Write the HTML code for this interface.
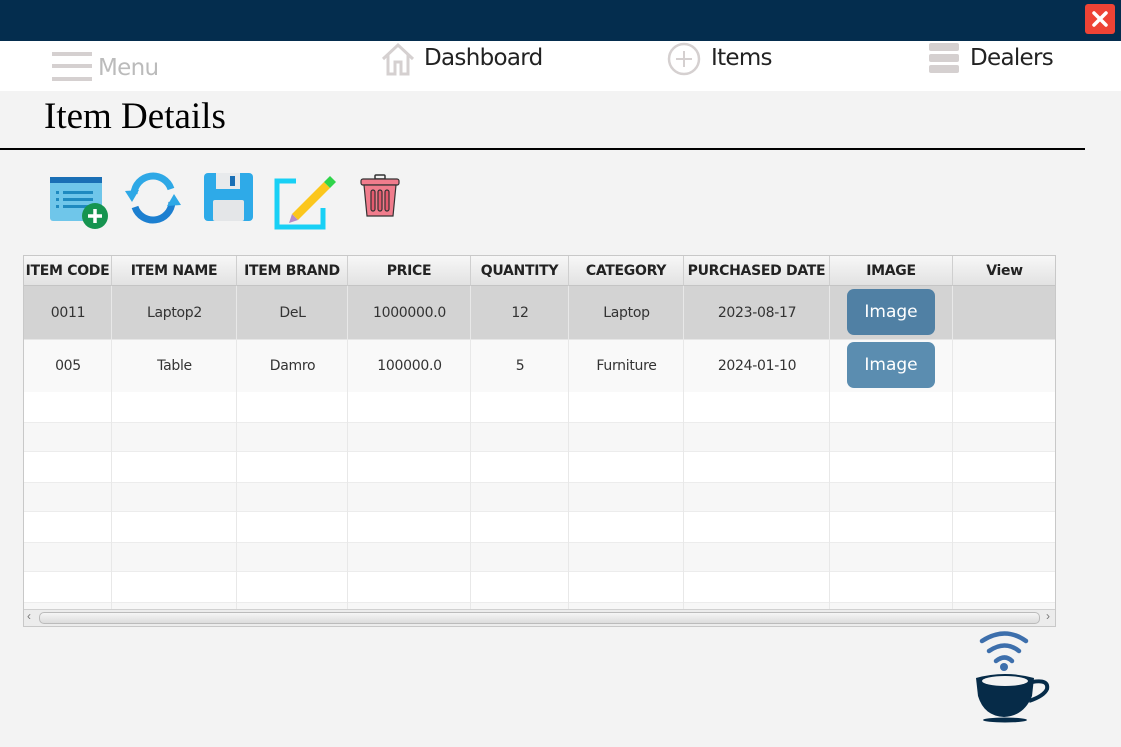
<!DOCTYPE html>
<html><head><meta charset="utf-8"><style>
*{margin:0;padding:0;box-sizing:border-box}
body{width:1121px;height:747px;background:#f3f3f3;position:relative;overflow:hidden;font-family:"Liberation Sans",sans-serif}
.abs{position:absolute}
.top{left:0;top:0;width:1121px;height:41px;background:#042d4e}
.close{left:1085px;top:4px;width:30px;height:30px;background:#ee4335;border-radius:3px}
.nav{left:0;top:41px;width:1121px;height:50px;background:#fff}
.nt{font-size:23px;color:#222;font-family:"DejaVu Sans","Liberation Sans",sans-serif;letter-spacing:-0.7px}
.title{left:44px;top:95px;font-family:"Liberation Serif",serif;font-size:37px;color:#000}
.rule{left:0;top:148px;width:1085px;height:2px;background:#000}
.tbl{left:23px;top:255px;width:1033px;height:372px;border:1px solid #c8c8c8;background:#fff;overflow:hidden}
.cell{position:absolute;display:flex;align-items:center;justify-content:center;font-size:14px;color:#333;font-family:"DejaVu Sans","Liberation Sans",sans-serif;letter-spacing:-0.3px}
.hd{font-weight:bold;font-size:14px;color:#222;background:linear-gradient(#f7f7f7,#e2e2e2);border-right:1px solid #cfcfcf;border-bottom:1px solid #c4c4c4}
.btn{position:absolute;width:88px;height:46px;border-radius:7px;color:#fff;font-size:17px;display:flex;align-items:center;justify-content:center;font-family:"DejaVu Sans",sans-serif}
</style></head><body>
<div class="abs top"></div>
<div class="abs close"><svg width="30" height="30"><path d="M9 9L21 21M21 9L9 21" stroke="#fff" stroke-width="3.5" stroke-linecap="round"/></svg></div>
<div class="abs nav"></div>
<svg class="abs" style="left:52px;top:52px" width="42" height="30"><rect x="0" y="0" width="40" height="4" fill="#d5d0d0"/><rect x="0" y="12" width="40" height="4" fill="#d5d0d0"/><rect x="0" y="25" width="40" height="4" fill="#d5d0d0"/></svg>
<div class="abs nt" style="left:98px;top:55px;color:#bbb">Menu</div>
<svg class="abs" style="left:380px;top:42px" width="36" height="34"><path d="M3 17L18 3L33 17M8 13V32H15V20H21V32H28V13" fill="none" stroke="#d5d0d0" stroke-width="3"/></svg>
<div class="abs nt" style="left:424px;top:45px">Dashboard</div>
<svg class="abs" style="left:667px;top:42px" width="36" height="36"><circle cx="17" cy="17" r="15" fill="none" stroke="#d5d0d0" stroke-width="2.5"/><path d="M17 9V25M9 17H25" stroke="#d5d0d0" stroke-width="2"/></svg>
<div class="abs nt" style="left:711px;top:45px">Items</div>
<svg class="abs" style="left:929px;top:43px" width="32" height="32"><rect x="0" y="0" width="30" height="8" rx="2" fill="#d5d0d0"/><rect x="0" y="11" width="30" height="8" rx="2" fill="#d5d0d0"/><rect x="0" y="22" width="30" height="8" rx="2" fill="#d5d0d0"/></svg>
<div class="abs nt" style="left:970px;top:45px">Dealers</div>
<div class="abs title">Item Details</div>
<div class="abs rule"></div>
<svg class="abs" style="left:48px;top:172px" width="62" height="60"><rect x="2" y="5" width="52" height="44" rx="3" fill="#6fc6ea"/><rect x="2" y="5" width="52" height="6" fill="#1a6fb5"/><g fill="#1f8ac0"><rect x="8" y="19" width="3" height="3"/><rect x="8" y="26" width="3" height="3"/><rect x="8" y="33" width="3" height="3"/><rect x="15" y="19" width="30" height="3"/><rect x="15" y="26" width="30" height="3"/><rect x="15" y="33" width="30" height="3"/></g><circle cx="47" cy="44" r="13" fill="#169450"/><path d="M47 37V51M40 44H54" stroke="#fff" stroke-width="3.5"/></svg>
<svg class="abs" style="left:122px;top:170px" width="62" height="56"><path d="M12 24A19 19 0 0 1 49 19" fill="none" stroke="#2ea8e6" stroke-width="7"/><path d="M3 21L17 20L10 32Z" fill="#2ea8e6"/><path d="M50 32A19 19 0 0 1 13 37" fill="none" stroke="#1c7fd0" stroke-width="7"/><path d="M59 35L45 36L52 24Z" fill="#2ea8e6"/></svg>
<svg class="abs" style="left:204px;top:173px" width="50" height="50"><rect x="0" y="0" width="49" height="48" rx="4" fill="#2eaae8"/><rect x="12" y="0" width="24" height="16" fill="#e8eaec"/><rect x="26" y="3" width="5" height="10" fill="#1a6fb5"/><rect x="9" y="27" width="31" height="21" rx="2" fill="#e4e6e8"/></svg>
<svg class="abs" style="left:272px;top:166px" width="66" height="66"><path d="M24 15H5V61H51V42" fill="none" stroke="#18d0f5" stroke-width="5"/><path d="M20 48L52 16L58 22L26 54Z" fill="#fbc61c"/><path d="M52 16L58 10L64 16L58 22Z" fill="#2fd44a"/><path d="M20 48L26 54L17 57Z" fill="#b58bc9"/></svg>
<svg class="abs" style="left:360px;top:174px" width="42" height="44"><rect x="15" y="1" width="10" height="4" rx="1" fill="none" stroke="#333" stroke-width="1.5"/><rect x="1" y="5" width="38" height="6" rx="2" fill="#f07c8c" stroke="#333" stroke-width="1.2"/><path d="M4 11H36L33 42H7Z" fill="#f07c8c" stroke="#333" stroke-width="1.2"/><g stroke="#333" stroke-width="1.2" fill="#e55a6e"><rect x="11" y="16" width="4" height="21" rx="2"/><rect x="18" y="16" width="4" height="21" rx="2"/><rect x="25" y="16" width="4" height="21" rx="2"/></g></svg>
<div class="abs tbl">
<div style="position:absolute;left:0;top:30px;width:1033px;height:53px;background:#d3d3d3"></div>
<div style="position:absolute;left:0;top:83px;width:1033px;height:53px;background:#f9f9f9;border-top:1px solid #e6e6e6"></div>
<div style="position:absolute;left:0;top:166px;width:1033px;height:30px;background:#f7f7f7;border-top:1px solid #ececec;border-bottom:1px solid #ececec"></div>
<div style="position:absolute;left:0;top:226px;width:1033px;height:30px;background:#f7f7f7;border-top:1px solid #ececec;border-bottom:1px solid #ececec"></div>
<div style="position:absolute;left:0;top:286px;width:1033px;height:30px;background:#f7f7f7;border-top:1px solid #ececec;border-bottom:1px solid #ececec"></div>
<div style="position:absolute;left:0;top:346px;width:1033px;height:10px;background:#f7f7f7;border-top:1px solid #ececec"></div>
<div style="position:absolute;left:87px;top:30px;width:1px;height:330px;background:#e8e8e8"></div>
<div style="position:absolute;left:212px;top:30px;width:1px;height:330px;background:#e8e8e8"></div>
<div style="position:absolute;left:323px;top:30px;width:1px;height:330px;background:#e8e8e8"></div>
<div style="position:absolute;left:446px;top:30px;width:1px;height:330px;background:#e8e8e8"></div>
<div style="position:absolute;left:544px;top:30px;width:1px;height:330px;background:#e8e8e8"></div>
<div style="position:absolute;left:659px;top:30px;width:1px;height:330px;background:#e8e8e8"></div>
<div style="position:absolute;left:805px;top:30px;width:1px;height:330px;background:#e8e8e8"></div>
<div style="position:absolute;left:928px;top:30px;width:1px;height:330px;background:#e8e8e8"></div>
<div class="cell hd" style="left:0;top:0;width:88px;height:30px">ITEM CODE</div>
<div class="cell hd" style="left:88px;top:0;width:125px;height:30px">ITEM NAME</div>
<div class="cell hd" style="left:213px;top:0;width:111px;height:30px">ITEM BRAND</div>
<div class="cell hd" style="left:324px;top:0;width:123px;height:30px">PRICE</div>
<div class="cell hd" style="left:447px;top:0;width:98px;height:30px">QUANTITY</div>
<div class="cell hd" style="left:545px;top:0;width:115px;height:30px">CATEGORY</div>
<div class="cell hd" style="left:660px;top:0;width:146px;height:30px">PURCHASED DATE</div>
<div class="cell hd" style="left:806px;top:0;width:123px;height:30px">IMAGE</div>
<div class="cell hd" style="left:929px;top:0;width:104px;height:30px">View</div>
<div class="cell" style="left:0;top:30px;width:88px;height:53px">0011</div>
<div class="cell" style="left:88px;top:30px;width:125px;height:53px">Laptop2</div>
<div class="cell" style="left:213px;top:30px;width:111px;height:53px">DeL</div>
<div class="cell" style="left:324px;top:30px;width:123px;height:53px">1000000.0</div>
<div class="cell" style="left:447px;top:30px;width:98px;height:53px">12</div>
<div class="cell" style="left:545px;top:30px;width:115px;height:53px">Laptop</div>
<div class="cell" style="left:660px;top:30px;width:146px;height:53px">2023-08-17</div>
<div class="btn" style="left:823px;top:33px;background:#5080a4">Image</div>
<div class="cell" style="left:0;top:83px;width:88px;height:53px">005</div>
<div class="cell" style="left:88px;top:83px;width:125px;height:53px">Table</div>
<div class="cell" style="left:213px;top:83px;width:111px;height:53px">Damro</div>
<div class="cell" style="left:324px;top:83px;width:123px;height:53px">100000.0</div>
<div class="cell" style="left:447px;top:83px;width:98px;height:53px">5</div>
<div class="cell" style="left:545px;top:83px;width:115px;height:53px">Furniture</div>
<div class="cell" style="left:660px;top:83px;width:146px;height:53px">2024-01-10</div>
<div class="btn" style="left:823px;top:86px;background:#5b8db0">Image</div>
<div style="position:absolute;left:0;top:353px;width:1033px;height:18px;background:#ececec;border-top:1px solid #d0d0d0"></div>
<div style="position:absolute;left:15px;top:356px;width:1001px;height:12px;border:1px solid #bbb;border-radius:5px;background:linear-gradient(#f5f5f5,#dcdcdc)"></div>
<div style="position:absolute;left:3px;top:353px;font-size:12px;color:#777">‹</div>
<div style="position:absolute;left:1022px;top:353px;font-size:12px;color:#777">›</div>
</div>
<svg class="abs" style="left:972px;top:626px" width="80" height="100"><g fill="none" stroke="#3d6fac" stroke-width="4.5" stroke-linecap="round"><path d="M10 15Q33 0 54 15"/><path d="M17 25Q33 14 47 25"/><path d="M24 35Q33 28 40 35"/></g><circle cx="32" cy="41" r="4" fill="#3d6fac"/><path d="M4 52Q33 44 62 52L60 70Q52 90 32 91Q12 90 6 70Z" fill="#062b48"/><ellipse cx="33" cy="55" rx="23" ry="5" fill="#f3f3f3"/><path d="M60 56Q77 53 75 63Q72 70 57 75" fill="none" stroke="#062b48" stroke-width="4"/><ellipse cx="33" cy="94" rx="22" ry="2.5" fill="#062b48"/></svg>
</body></html>
